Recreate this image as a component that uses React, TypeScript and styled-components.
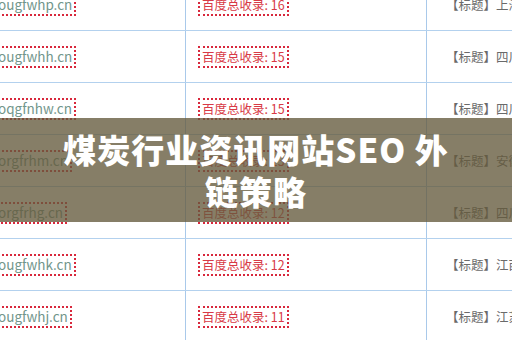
import styled, { createGlobalStyle } from "styled-components";

const rows = [
  { site: "ougfwhp.cn", count: 16, title: "上海煤炭行业资讯" },
  { site: "ougfwhh.cn", count: 15, title: "四川煤炭行业资讯" },
  { site: "oqgfnhw.cn", count: 15, title: "四川煤炭行业资讯" },
  { site: "orgfrhm.cn", count: 13, title: "安徽煤炭行业资讯" },
  { site: "orgfrhg.cn", count: 12, title: "四川煤炭行业资讯" },
  { site: "ougfwhk.cn", count: 12, title: "江西煤炭行业资讯" },
  { site: "ougfwhj.cn", count: 11, title: "江苏煤炭行业资讯" },
];

function App() {
  return (
    <>
      <GlobalStyle />
      <Page>
        <Table>
          {rows.map((r) => (
            <Row key={r.site}>
              <SiteCell>
                <DotBox $tone="site">{r.site}</DotBox>
              </SiteCell>
              <CountCell>
                <DotBox $tone="count">百度总收录: {r.count}</DotBox>
              </CountCell>
              <TitleCell>【标题】{r.title}</TitleCell>
            </Row>
          ))}
        </Table>
        <Banner>
          <Heading>煤炭行业资讯网站SEO 外链策略</Heading>
        </Banner>
      </Page>
    </>
  );
}

export default App;

const GlobalStyle = createGlobalStyle`
  html, body {
    margin: 0;
    padding: 0;
    background: #ffffff;
  }
  body {
    font-family: "Noto Sans CJK SC", "Noto Sans", sans-serif;
  }
`;

const Page = styled.div`
  position: relative;
  width: 512px;
  height: 340px;
  overflow: hidden;
  background: #ffffff;
`;

const Table = styled.div`
  display: flex;
  flex-direction: column;
  margin-top: -21px;
`;

const Row = styled.div`
  display: grid;
  grid-template-columns: 186px 241px 1fr;
  height: 52px;
  border-bottom: 1px solid #b3d1ee;
  box-sizing: border-box;
`;

const Cell = styled.div`
  display: flex;
  align-items: center;
  overflow: hidden;
  white-space: nowrap;
  font-size: 12.5px;
`;

const SiteCell = styled(Cell)`
  border-right: 1px solid #a9c9ea;
  padding-top: 1px;
`;

const CountCell = styled(Cell)`
  border-right: 1px solid #a9c9ea;
  padding-left: 12px;
  padding-top: 1px;
`;

const TitleCell = styled(Cell)`
  padding-left: 19px;
  color: #6a6a6a;
`;

const DotBox = styled.span<{ $tone: "site" | "count" }>`
  display: inline-block;
  border: 2px dotted #d8283c;
  padding: 1px 2px 2px 2px;
  line-height: 15px;
  margin-left: ${(p) => (p.$tone === "site" ? "-6px" : "0")};
  color: ${(p) => (p.$tone === "site" ? "#72968c" : "#d83a46")};
  font-size: ${(p) => (p.$tone === "site" ? "13.5px" : "12.5px")};
`;

const Banner = styled.div`
  position: absolute;
  left: 0;
  right: 0;
  top: 118px;
  height: 104px;
  display: flex;
  align-items: center;
  justify-content: center;
  background: rgba(100, 90, 60, 0.78);
`;

const Heading = styled.h1`
  margin: 0;
  width: 400px;
  text-align: center;
  color: #ffffff;
  font-family: "Noto Sans CJK SC", "Noto Sans", sans-serif;
  font-weight: 900;
  font-size: 33px;
  line-height: 42px;
  letter-spacing: 1px;
`;
